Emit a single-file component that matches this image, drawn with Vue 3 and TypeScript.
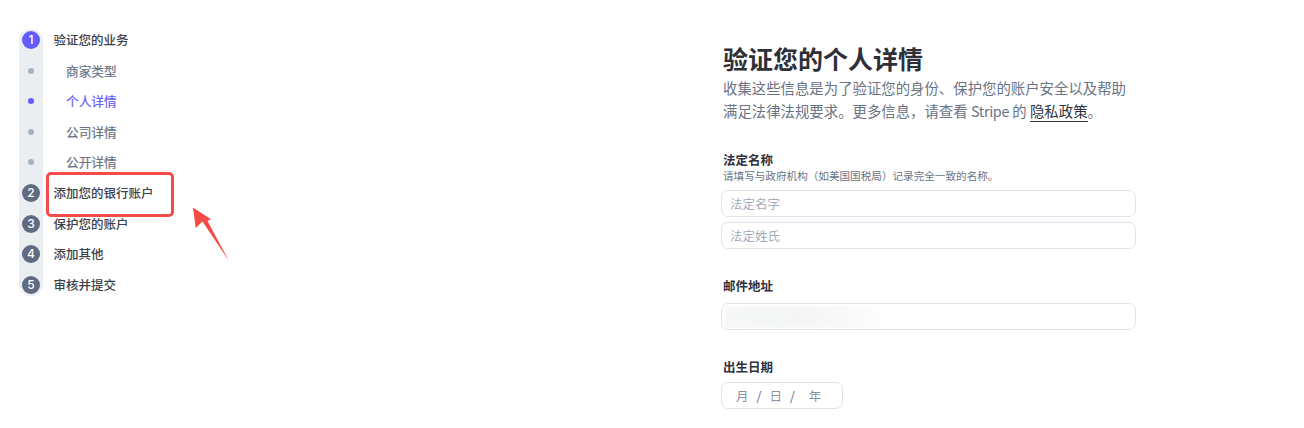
<script setup lang="ts">
interface Step { label: string; marker: string; kind: 'done' | 'main' | 'sub' | 'active' | 'current' }
const steps: Step[] = [
  { label: '验证您的业务', marker: '1', kind: 'current' },
  { label: '商家类型', marker: '', kind: 'sub' },
  { label: '个人详情', marker: '', kind: 'active' },
  { label: '公司详情', marker: '', kind: 'sub' },
  { label: '公开详情', marker: '', kind: 'sub' },
  { label: '添加您的银行账户', marker: '2', kind: 'main' },
  { label: '保护您的账户', marker: '3', kind: 'main' },
  { label: '添加其他', marker: '4', kind: 'main' },
  { label: '审核并提交', marker: '5', kind: 'main' },
]
</script>

<template>
  <div class="page">
    <aside class="side">
      <ol class="steps">
        <li v-for="s in steps" :key="s.label" class="step" :class="s.kind">
          <span class="rail">
            <span v-if="s.marker" class="num">{{ s.marker }}</span>
            <span v-else class="dot"></span>
          </span>
          <span class="label">{{ s.label }}</span>
        </li>
      </ol>
      <div class="callout"></div>
      <svg class="arrow" width="50" height="72" viewBox="0 0 50 72">
        <polygon points="13,17.5 31,29.3 27.5,31 49,71 22.5,31.5 15.7,38" fill="#f64b45" />
      </svg>
    </aside>
    <main class="form">
      <h1>验证您的个人详情</h1>
      <p class="desc">收集这些信息是为了验证您的身份、保护您的账户安全以及帮助<br />满足法律法规要求。更多信息，请查看 <span class="brand">Stripe</span> 的 <a>隐私政策</a>。</p>

      <section class="name">
        <h2>法定名称</h2>
        <p class="hint">请填写与政府机构（如美国国税局）记录完全一致的名称。</p>
        <input class="field" placeholder="法定名字" />
        <input class="field second" placeholder="法定姓氏" />
      </section>

      <section class="email">
        <h2>邮件地址</h2>
        <div class="field masked"><span class="blur"></span></div>
      </section>

      <section class="birth">
        <h2>出生日期</h2>
        <div class="field date">
          <span class="m">月</span><i>/</i><span class="d">日</span><i>/</i><span class="y">年</span>
        </div>
      </section>
    </main>
  </div>
</template>

<style scoped>
.page {
  display: flex;
  width: 1304px;
  height: 428px;
  overflow: hidden;
  background: #fff;
  font-family: "Noto Sans CJK SC", "Noto Sans", sans-serif;
  color: #30313d;
}
.side {
  position: relative;
  width: 721px;
  flex: none;
  padding: 29px 0 0 19px;
  box-sizing: border-box;
}
.steps { list-style: none; margin: 0; padding: 0; }
.step {
  display: flex;
  height: 30.6px;
  font-size: 12.5px;
}
.rail {
  flex: none;
  width: 24px;
  background: #ebeef1;
  display: flex;
  align-items: center;
  justify-content: center;
}
.label {
  display: flex;
  align-items: center;
  margin-left: 10.5px;
  padding-bottom: 1px;
  font-weight: 500;
  color: #3c4048;
}
.step:first-child { height: 26.3px; }
.step:first-child .rail { border-radius: 12px 12px 0 0; padding-bottom: 4.3px; }
.step:first-child .label { padding-bottom: 6.3px; }
.step:last-child { height: 26.3px; }
.step:last-child .rail { border-radius: 0 0 12px 12px; padding-top: 4.3px; }
.step:last-child .label { padding-top: 3.3px; padding-bottom: 0; }
.num {
  width: 18px;
  height: 18px;
  border-radius: 50%;
  background: #5f6b80;
  color: #fff;
  font: 500 12px/18px "Inter", "Noto Sans", sans-serif;
  text-align: center;
}
.current .num { background: #635bff; }
.dot { width: 6px; height: 6px; border-radius: 50%; background: #a9b1bf; }
.sub .label, .active .label { margin-left: 23px; font-size: 12.7px; font-weight: 400; color: #6a7383; -webkit-text-stroke: 0.2px currentColor; }
.active .label { color: #635bff; }
.active .dot { background: #635bff; }
.callout {
  position: absolute;
  left: 46px;
  top: 172px;
  width: 128px;
  height: 45px;
  box-sizing: border-box;
  border: 3px solid #f44c48;
  border-radius: 5px;
}
.arrow { position: absolute; left: 180px; top: 190px; }

.form { width: 415px; flex: none; padding-top: 41px; }
h1 {
  margin: 0 0 0 2px;
  font-size: 25px;
  line-height: 34px;
  font-weight: 700;
  color: #2f3037;
}
.desc {
  margin: 2px 0 0 2px;
  font-size: 14.4px;
  line-height: 22.6px;
  color: #6a7383;
  white-space: nowrap;
}
.brand { letter-spacing: -0.3px; }
.desc a { color: #30313d; border-bottom: 1px solid #30313d; }
h2 {
  margin: 0 0 0 2px;
  font-size: 12.5px;
  line-height: 18px;
  font-weight: 700;
  color: #30313d;
}
.hint {
  margin: 0 0 0 2px;
  font-size: 10.6px;
  line-height: 14px;
  color: #6a7383;
  white-space: nowrap;
}
.field {
  display: block;
  width: 415px;
  height: 27px;
  box-sizing: border-box;
  margin: 7px 0 0;
  padding: 0 8px;
  border: 1px solid #e0e3e9;
  border-radius: 7px;
  background: #fff;
  font: 400 12.5px "Noto Sans CJK SC", sans-serif;
  outline: none;
}
.field::placeholder { color: #a3acba; opacity: 1; }
.field.second { margin-top: 5px; }
.name { margin-top: 29px; }
.email { margin-top: 28px; }
.birth { margin-top: 28px; }
.email .field { margin-top: 8px; position: relative; overflow: hidden; }
.blur {
  position: absolute;
  left: 3px;
  top: 2px;
  width: 155px;
  height: 22px;
  background: linear-gradient(90deg, #f6f7f7, #f4f5f5 45%, #f8f8f8 75%, #fdfdfd);
  filter: blur(1.5px);
}
.date {
  display: flex;
  align-items: center;
  width: 122px;
  margin-top: 6px;
  padding: 0;
  color: #8792a2;
  border-color: #dfe3ec;
}
.date span { font-size: 12.5px; }
.date i { font-style: normal; font-size: 12.5px; color: #59647a; }
.m { margin-left: 14px; }
.date i:nth-of-type(1) { margin-left: 8px; }
.d { margin-left: 8px; }
.date i:nth-of-type(2) { margin-left: 8px; }
.y { margin-left: 14px; }
</style>

<style>
html, body { margin: 0; background: #fff; }
</style>
